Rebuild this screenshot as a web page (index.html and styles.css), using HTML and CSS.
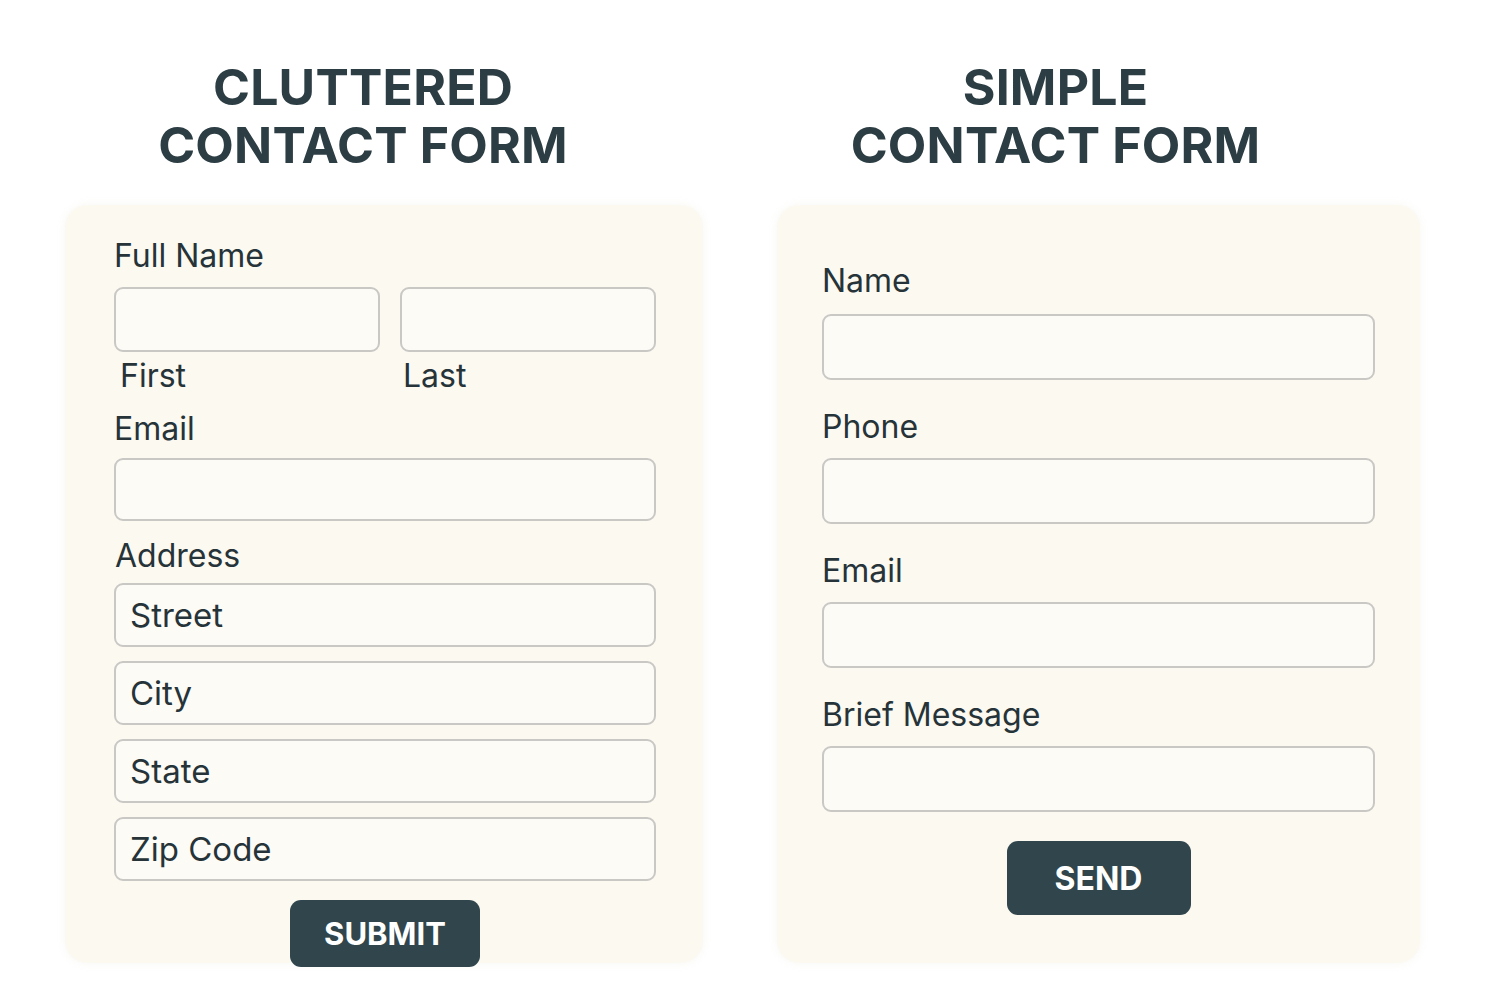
FILE: index.html
```html
<!DOCTYPE html>
<html lang="en">
<head>
    <meta charset="UTF-8">
    <meta name="viewport" content="width=device-width, initial-scale=1.0">
    <title>Cluttered vs Simple Contact Form</title>
    <link rel="stylesheet" href="styles.css">
</head>
<body>
    <div class="compare">
        <div class="column">
            <h1 class="title title-left"><span>CLUTTERED</span><span>CONTACT FORM</span></h1>
            <form class="card cluttered">
                <label class="label label-top">Full Name</label>
                <div class="name-row">
                    <div class="name-part">
                        <input type="text" class="field">
                        <span class="sub-label">First</span>
                    </div>
                    <div class="name-part">
                        <input type="text" class="field">
                        <span class="sub-label sub-last">Last</span>
                    </div>
                </div>
                <label class="label label-email">Email</label>
                <input type="text" class="field field-email">
                <label class="label label-address">Address</label>
                <div class="address">
                    <input type="text" class="field" placeholder="Street">
                    <input type="text" class="field" placeholder="City">
                    <input type="text" class="field" placeholder="State">
                    <input type="text" class="field" placeholder="Zip Code">
                </div>
                <button type="button" class="btn btn-submit">SUBMIT</button>
            </form>
        </div>
        <div class="column">
            <h1 class="title title-right"><span>SIMPLE</span><span>CONTACT FORM</span></h1>
            <form class="card simple">
                <label class="label">Name</label>
                <input type="text" class="field">
                <label class="label">Phone</label>
                <input type="text" class="field">
                <label class="label">Email</label>
                <input type="text" class="field">
                <label class="label">Brief Message</label>
                <input type="text" class="field">
                <button type="button" class="btn btn-send">SEND</button>
            </form>
        </div>
    </div>
</body>
</html>
```

FILE: styles.css
```css
body {
    margin: 0;
    background-color: #fff;
    font-family: Inter, "Noto Sans", sans-serif;
    color: #263439;
}
.compare {
    display: grid;
    grid-template-columns: 638px 643px;
    column-gap: 74px;
    padding: 58px 0 37px 65px;
}
.title {
    margin: 0 0 31px;
    font-size: 50px;
    line-height: 58px;
    font-weight: 700;
    letter-spacing: 0.2px;
    text-align: center;
    color: #2c3d43;
}
.title span {
    display: block;
}
.title-left {
    padding-right: 42px;
}
.title-right {
    padding-right: 86px;
}
.card {
    box-sizing: border-box;
    height: 758px;
    background-color: #fcf9f1;
    border-radius: 22px;
    box-shadow: 0 0 8px rgba(200, 190, 160, 0.12);
    display: flex;
    flex-direction: column;
}
.card > * {
    flex-shrink: 0;
}
.label, .sub-label {
    display: block;
    font-size: 32px;
    line-height: 38px;
    color: #263439;
}
.field {
    box-sizing: border-box;
    width: 100%;
    height: 64px;
    margin: 0;
    padding: 0 14px;
    border: 2px solid #c9c8c4;
    border-radius: 9px;
    background-color: #fdfbf6;
    font-family: inherit;
    font-size: 33px;
    color: #263439;
}
.field::placeholder {
    color: #263439;
    opacity: 1;
}
.btn {
    align-self: center;
    border: none;
    border-radius: 11px;
    background-color: #30454c;
    color: #fff;
    font-family: inherit;
    font-weight: 700;
    cursor: pointer;
}

/* left form */
.cluttered {
    padding: 32px 47px 0 49px;
}
.label-top {
    margin-bottom: 12px;
}
.name-row {
    display: grid;
    grid-template-columns: 266px 1fr;
    column-gap: 20px;
}
.name-row .field {
    height: 65px;
}
.sub-label {
    margin-top: 5px;
    padding-left: 6px;
}
.sub-last {
    padding-left: 3px;
}
.label-email {
    margin: 15px 0 10px;
}
.field-email {
    height: 63px;
}
.label-address {
    margin: 16px 0 8px 1px;
}
.address {
    display: flex;
    flex-direction: column;
    gap: 14px;
}
.btn-submit {
    margin-top: 19px;
    width: 190px;
    height: 67px;
    font-size: 31px;
}

/* right form */
.simple {
    padding: 57px 45px 0;
}
.simple .label {
    margin: 28px 0 12px;
}
.simple .label:first-child {
    margin-top: 0;
    margin-bottom: 14px;
}
.simple .field {
    height: 66px;
}
.btn-send {
    margin-top: 29px;
    width: 184px;
    height: 74px;
    font-size: 32px;
}
```
